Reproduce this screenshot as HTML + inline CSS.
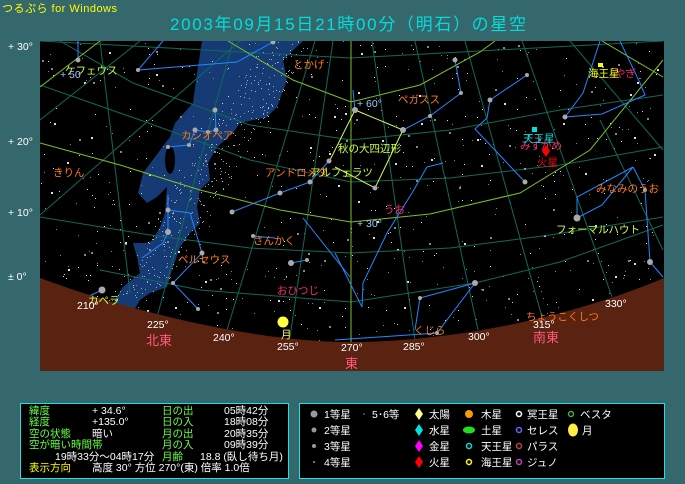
<!DOCTYPE html>
<html><head><meta charset="utf-8"><style>
html,body{margin:0;padding:0;background:#35686c;}
svg{display:block;font-family:"Liberation Sans","Noto Sans CJK JP",sans-serif;}
</style></head><body>
<svg id="s" width="685" height="484" viewBox="0 0 685 484" xmlns="http://www.w3.org/2000/svg">
<rect width="685" height="484" fill="#35686c"/>
<text x="2" y="12" fill="#ffff00" font-size="11" textLength="115">つるぷら for Windows</text>
<text x="170" y="30" fill="#00dede" font-size="17" textLength="356">2003年09月15日21時00分（明石）の星空</text>
<g fill="#fff" font-size="10.5">
<text x="8" y="50">+ 30°</text><text x="8" y="145">+ 20°</text><text x="8" y="216">+ 10°</text><text x="8" y="280">± 0°</text>
</g>
<svg x="40" y="41" width="624" height="330" viewBox="40 41 624 330" overflow="hidden">
<rect x="40" y="41" width="624" height="330" fill="#000"/>
<path fill="#163a74" d="M202,41 L197,73 193,103 175,123 170,137 143,173 138,193 147,203 157,197 167,187 165,213 160,227 153,240 147,243 133,243 137,257 140,273 123,287 113,303 133,312 140,300 150,293 167,287 173,267 180,247 190,233 200,223 197,207 200,190 210,180 208,163 217,147 233,133 240,123 267,117 277,107 287,80 283,60 303,41Z"/>
<ellipse cx="170" cy="160" rx="5" ry="14" fill="#000"/>
<g id="stars"></g>
<g fill="none" stroke="#0f6a58" stroke-width="1">
<polyline points="60,41 133,83 250,125 351,140 450,130 560,110 663,95"/>
<polyline points="40,85 140,120 250,160 351,182 450,178 560,165 663,147"/>
<polyline points="40,217 150,235 250,248 351,253 450,248 550,235 663,217"/>
<polyline points="100,270 200,290 351,302 475,283 560,262 663,225"/>
<polyline points="40,41 351,58 663,41"/>
<line x1="130" y1="293" x2="100" y2="41"/><line x1="157" y1="317" x2="233" y2="41"/>
<line x1="227" y1="330" x2="315" y2="41"/><line x1="290" y1="337" x2="333" y2="41"/>
<line x1="415" y1="340" x2="372" y2="41"/><line x1="478" y1="330" x2="415" y2="41"/>
<line x1="542" y1="317" x2="465" y2="41"/><line x1="612" y1="297" x2="522" y2="41"/>
<line x1="663" y1="150" x2="570" y2="41"/><line x1="40" y1="120" x2="140" y2="41"/>
<line x1="40" y1="215" x2="240" y2="41"/><line x1="663" y1="250" x2="600" y2="120"/>
</g>
<g fill="none" stroke="#7fbf20" stroke-width="1">
<polyline points="40,143 120,165 200,190 280,210 351,222 430,214 520,193 590,150 663,60"/>
<polyline points="228,41 293,80 351,102 420,85 480,52 495,41"/>
<line x1="40" y1="87" x2="100" y2="41"/><line x1="602" y1="41" x2="663" y2="77"/>
<line x1="351" y1="41" x2="351" y2="345"/>
</g>
<g fill="none" stroke="#ccff55" stroke-width="1">
<polyline points="355,110 403,130 375,188 335,167"/><line x1="355" y1="110" x2="329" y2="162"/>
</g>
<g fill="none" stroke="#2288ff" stroke-width="1">
<line x1="78" y1="60" x2="78" y2="41"/><polyline points="163,41 138,70 237,62 273,42"/>
<polyline points="215,110 216,130 208,132 195,130"/><polyline points="168,147 189,145 195,130"/>
<polyline points="232,212 280,193 310,182 329,161"/>
<polyline points="168,195 168,210 168,232 163,243 142,258"/><polyline points="168,210 190,213 202,253 173,283 198,309"/>
<polyline points="87,297 102,290"/><polyline points="253,236 275,238"/><polyline points="291,263 307,260"/>
<polyline points="303,218 350,277"/><polyline points="353,90 355,110"/>
<polyline points="403,130 430,116 461,93 455,60"/><polyline points="490,100 527,75"/>
<polyline points="490,100 487,118 475,129 525,182"/>
<polyline points="427,167 443,163"/><polyline points="427,167 412,193 397,217 387,233 363,283 362,307 335,253"/>
<polyline points="420,298 475,283 437,333 335,340"/><polyline points="420,298 415,330"/>
<polyline points="620,41 640,83 645,95 602,114 565,117 583,93 600,41"/>
<polyline points="577,218 602,205 633,167 577,197 577,218"/><polyline points="633,167 645,190 650,262 663,277"/>
</g>
<g fill="#aaa">
<circle cx="78" cy="60" r="2.5"/><circle cx="138" cy="70" r="2"/><circle cx="273" cy="42" r="2.5"/>
<circle cx="215" cy="110" r="2.5"/><circle cx="195" cy="130" r="2.5"/><circle cx="216" cy="130" r="2.5"/><circle cx="208" cy="132" r="2"/><circle cx="168" cy="147" r="2"/><circle cx="189" cy="145" r="2"/>
<circle cx="232" cy="212" r="2.5"/><circle cx="280" cy="193" r="2.5"/><circle cx="310" cy="182" r="2.5"/><circle cx="329" cy="161" r="2.5"/>
<circle cx="168" cy="210" r="2.5"/><circle cx="168" cy="232" r="3"/><circle cx="202" cy="253" r="2.5"/><circle cx="173" cy="283" r="2"/><circle cx="198" cy="309" r="2"/>
<circle cx="102" cy="290" r="3.5"/><circle cx="253" cy="236" r="2"/><circle cx="291" cy="263" r="3"/><circle cx="307" cy="260" r="2"/>
<circle cx="355" cy="110" r="3"/><circle cx="403" cy="130" r="3"/><circle cx="375" cy="188" r="2.5"/><circle cx="455" cy="60" r="2.5"/><circle cx="461" cy="93" r="2"/><circle cx="430" cy="116" r="2"/>
<circle cx="490" cy="100" r="2.5"/><circle cx="527" cy="75" r="2"/><circle cx="525" cy="182" r="2.5"/>
<circle cx="475" cy="283" r="3"/><circle cx="437" cy="333" r="2"/><circle cx="420" cy="298" r="2"/>
<circle cx="565" cy="117" r="2.5"/><circle cx="577" cy="218" r="3.5"/><circle cx="650" cy="262" r="3"/><circle cx="645" cy="190" r="2"/>
</g>
<path d="M40,278 C120,308 250,342 350,342 C450,342 570,318 664,278 L664,371 L40,371Z" fill="#5a2210"/>
<g font-size="10.5">
<g fill="#ff7a1a"><text x="293" y="68">とかげ</text><text x="181" y="139">カシオペア</text><text x="53" y="176">きりん</text><text x="265" y="176">アンドロメダ</text><text x="253" y="244">さんかく</text><text x="178" y="263">ペルセウス</text><text x="398" y="103">ペガスス</text><text x="596" y="192">みなみのうお</text><text x="526" y="320">ちょうこくしつ</text><text x="414" y="334">くじら</text></g>
<g fill="#ccff44"><text x="65" y="74">ケフェウス</text><text x="310" y="176">アルフェラツ</text><text x="88" y="304">カペラ</text><text x="338" y="152">秋の大四辺形</text><text x="556" y="233">フォーマルハウト</text></g>
<g fill="#ff2a6a"><text x="277" y="294">おひつじ</text><text x="384" y="213">うお</text><text x="615" y="77">やぎ</text><text x="520" y="149">みずがめ</text></g>
<g fill="#99ccff"><text x="60" y="78">+ 50</text><text x="357" y="107">+ 60°</text><text x="357" y="227">+ 30°</text></g>
<text x="523" y="142" fill="#00e0e0">天王星</text><rect x="532" y="127" width="5" height="5" fill="#00e0e0"/>
<text x="537" y="166" fill="#ff0000">火星</text><path d="M546,145 l4,6 -4,6 -4,-6Z" fill="#ff0000"/>
<text x="588" y="77" fill="#ffff00">海王星</text><rect x="598" y="63" width="5" height="4" fill="#ffff00"/>
<circle cx="283" cy="322" r="5.5" fill="#ffff44"/>
<g fill="#fff"><text x="77" y="309">210°</text><text x="147" y="328">225°</text><text x="213" y="341">240°</text><text x="277" y="350">255°</text><text x="341" y="351">270°</text><text x="403" y="350">285°</text><text x="468" y="340">300°</text><text x="533" y="328">315°</text><text x="605" y="307">330°</text></g>
<text x="281" y="338" fill="#ffff66">月</text>
<g fill="#ff5a80" font-size="13"><text x="146" y="345">北東</text><text x="345" y="368">東</text><text x="533" y="342">南東</text></g>
</g>
</svg>
<rect x="20.5" y="403.5" width="268" height="75" fill="#000" stroke="#22e0e0"/>
<rect x="299.5" y="403.5" width="365" height="75" fill="#000" stroke="#22e0e0"/>
<g font-size="10.5">
<g fill="#66ff44"><text x="29" y="414">緯度</text><text x="29" y="425">経度</text><text x="29" y="437">空の状態</text><text x="29" y="448">空が暗い時間帯</text>
<text x="162" y="414">日の出</text><text x="162" y="425">日の入</text><text x="162" y="437">月の出</text><text x="162" y="448">月の入</text><text x="162" y="460">月齢</text></g>
<g fill="#fff"><text x="92" y="414">+   34.6°</text><text x="92" y="425">+135.0°</text><text x="92" y="437">暗い</text>
<text x="224" y="414">05時42分</text><text x="224" y="425">18時08分</text><text x="224" y="437">20時35分</text><text x="224" y="448">09時39分</text>
<text x="55" y="460">19時33分～04時17分</text><text x="200" y="460">18.8 (臥し待ち月)</text>
<text x="92" y="471">高度 30°  方位 270°(東)  倍率 1.0倍</text></g>
<text x="29" y="471" fill="#ffff00">表示方向</text>
<g fill="#fff"><text x="324" y="418">1等星</text><text x="324" y="434">2等星</text><text x="324" y="450">3等星</text><text x="324" y="466">4等星</text><text x="372" y="418">5･6等</text>
<text x="429" y="418">太陽</text><text x="429" y="434">水星</text><text x="429" y="450">金星</text><text x="429" y="466">火星</text>
<text x="481" y="418">木星</text><text x="481" y="434">土星</text><text x="481" y="450">天王星</text><text x="481" y="466">海王星</text>
<text x="527" y="418">冥王星</text><text x="527" y="434">セレス</text><text x="527" y="450">パラス</text><text x="527" y="466">ジュノ</text>
<text x="580" y="418">ベスタ</text><text x="582" y="434">月</text></g>
<circle cx="314" cy="414" r="3.5" fill="#999"/><circle cx="314" cy="430" r="2.5" fill="#999"/><circle cx="314" cy="446" r="2" fill="#999"/><circle cx="314" cy="462" r="1" fill="#999"/><circle cx="364" cy="414" r="0.8" fill="#999"/>
<path d="M419,408 l4,6 -4,6 -4,-6Z" fill="#ffff88"/><path d="M419,424 l4,6 -4,6 -4,-6Z" fill="#00e0e0"/><path d="M419,440 l4,6 -4,6 -4,-6Z" fill="#ff00ff"/><path d="M419,456 l4,6 -4,6 -4,-6Z" fill="#ff0000"/>
<circle cx="469" cy="414" r="4" fill="#ff9900"/><ellipse cx="469" cy="430" rx="6" ry="3.5" fill="#22dd22"/><circle cx="469" cy="446" r="2.5" fill="none" stroke="#00e0e0" stroke-width="1.5"/><circle cx="469" cy="462" r="2.5" fill="none" stroke="#ffff00" stroke-width="1.5"/>
<circle cx="519" cy="414" r="2.5" fill="none" stroke="#fff" stroke-width="1.5"/><circle cx="519" cy="430" r="2.5" fill="none" stroke="#6666ff" stroke-width="1.5"/><circle cx="519" cy="446" r="2.5" fill="none" stroke="#bb4444" stroke-width="1.5"/><circle cx="519" cy="462" r="2.5" fill="none" stroke="#bb44bb" stroke-width="1.5"/>
<circle cx="571" cy="414" r="2.5" fill="none" stroke="#44aa44" stroke-width="1.5"/><ellipse cx="573" cy="430" rx="5" ry="6.5" fill="#ffee44"/>
</g>
</svg>
<script>
var g=document.getElementById('stars'),s=12345;function r(){s=(s*1103515245+12345)%2147483648;return s/2147483648;}
var h='';for(var i=0;i<750;i++){var x=40+r()*624,y=41+r()*300,c=r()<0.5?'#ddd':'#888',w=r()<0.85?1:2;h+='<rect x="'+x.toFixed(0)+'" y="'+y.toFixed(0)+'" width="'+w+'" height="'+w+'" fill="'+c+'"/>';}
for(var j=0;j<350;j++){var t=r(),x2=290-t*160+(r()-0.5)*50,y2=41+t*260;h+='<rect x="'+x2.toFixed(0)+'" y="'+y2.toFixed(0)+'" width="1" height="1" fill="#9ab"/>';}
g.innerHTML=h;
</script>
</body></html>
